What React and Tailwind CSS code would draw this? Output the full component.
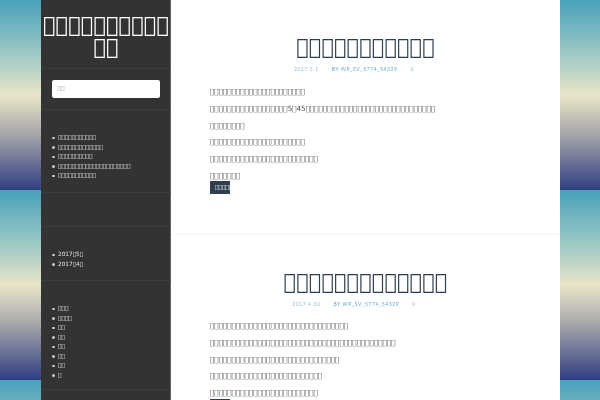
// the page's Japanese text shows as empty boxes, so every box is a missing-glyph character
const box = (n) => "\uE000".repeat(n);

function Divider() {
  return <div className="h-px bg-[#3d3d3d]" />;
}

function SideList({ items }) {
  return (
    <ul className="text-[5.76px] leading-[9.5px] text-[#e5e5e5] will-change-transform">
      {items.map((item, i) => (
        <li key={i} className="flex items-center gap-[3.5px] pl-[11px]">
          <span className="h-[2.5px] w-[2.5px] rounded-full bg-[#cccccc]" />
          {item}
        </li>
      ))}
    </ul>
  );
}

function Post({ title, date, lines }) {
  return (
    <article className="px-[39px] text-center">
      <h2 className="text-[21px] leading-[30px] text-[#2c3e50] will-change-transform">{box(title)}</h2>
      <div className="mt-[3px] mr-[23px] flex justify-center text-[5px] leading-[8px] tracking-[0.6px] font-['Lato',sans-serif] will-change-transform">
        <span className="mr-[13px] text-[#8fbbd0]">{date}</span>
        <span className="text-[#5fa8d0]">BY WP_SV_5774_54329</span>
        <span className="ml-[13px] text-[#8fbbd0]">0</span>
      </div>
      <div className="mt-[12.5px] text-left text-[7.2px] text-[#4a4a4a] will-change-transform">
        {lines.map((line, i) => (
          <p key={i} className="mb-[5.8px] leading-[11px]">{line}</p>
        ))}
        <a className="-mt-[5.3px] block h-[13px] w-[20px] overflow-hidden whitespace-nowrap bg-[#2c3e50] pl-[5px] text-[5.76px] leading-[13px] text-white">
          {box(5)}
        </a>
      </div>
    </article>
  );
}

export default function App() {
  return (
    <div className="h-[400px] w-[600px] overflow-hidden bg-[linear-gradient(to_bottom,#48a1bb_0%,#9cc8c4_28%,#e9e5c8_50%,#a9a8ab_70%,#2f3f82_100%)] bg-[length:100%_190px] font-['DejaVu_Sans',sans-serif]">
      <div className="mx-auto flex h-full w-[519px] bg-white">
        <aside className="h-full w-[130px] shrink-0 bg-[#333333] shadow-[inset_-1px_0_0_#666666]">
          <h1 className="pt-[14px] text-center text-[21px] leading-[22px] text-white will-change-transform">
            {box(10)} {box(2)}
          </h1>
          <div className="mt-[10px]"><Divider /></div>
          <div className="p-[11px]">
            <div className="h-[18px] rounded-[2px] bg-white pl-[6px] text-[5.76px] leading-[17px] text-[#999999]">{box(2)}</div>
          </div>
          <Divider />
          <div className="pb-[11px] pt-[23px]">
            <SideList items={[box(11), box(13), box(10), box(21), box(11)]} />
          </div>
          <Divider />
          <div className="h-[33px]" />
          <Divider />
          <div className="pb-[11px] pt-[23px]">
            <SideList items={["2017\uE0005\uE000", "2017\uE0004\uE000"]} />
          </div>
          <Divider />
          <div className="pb-[9px] pt-[23px]">
            <SideList items={[box(3), box(4), box(2), box(2), box(2), box(2), box(2), box(1)]} />
          </div>
          <Divider />
        </aside>
        <main className="min-w-0 flex-1">
          <div className="pt-[32px]">
            <Post
              title={11}
              date="2017 5 1"
              lines={[box(22), box(18) + "5" + box(1) + "45" + box(30), box(8), box(22), box(25), box(7)]}
            />
          </div>
          <div className="mt-[40px] h-px bg-[#f5f5f5]" />
          <div className="pt-[32px]">
            <Post
              title={13}
              date="2017 4 30"
              lines={[box(32), box(43), box(30), box(26), box(25)]}
            />
          </div>
        </main>
      </div>
    </div>
  );
}
